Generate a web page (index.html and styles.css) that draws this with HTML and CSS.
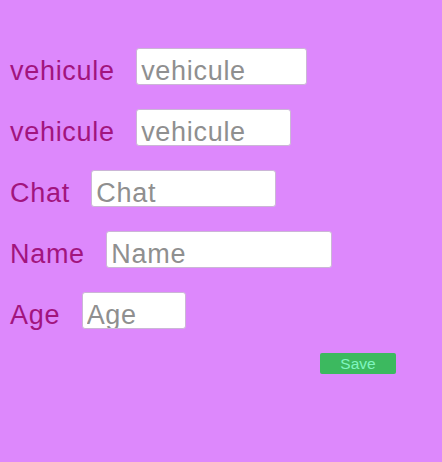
FILE: index.html
```html
<!DOCTYPE html>
<html>
<head>
<meta charset="utf-8">
<link rel="stylesheet" href="styles.css">
</head>
<body>
<form class="form">
  <div class="row"><label class="label">vehicule</label><input class="field w1" placeholder="vehicule"></div>
  <div class="row"><label class="label">vehicule</label><input class="field w2" placeholder="vehicule"></div>
  <div class="row"><label class="label">Chat</label><input class="field w3" placeholder="Chat"></div>
  <div class="row"><label class="label">Name</label><input class="field w4" placeholder="Name"></div>
  <div class="row"><label class="label">Age</label><input class="field w5" placeholder="Age"></div>
  <div class="actions"><button type="button" class="save">Save</button></div>
</form>
</body>
</html>
```
FILE: styles.css
```css
html, body {
  margin: 0;
  padding: 0;
  background: #dd88fc;
  height: 100%;
}
.form {
  display: flex;
  flex-direction: column;
  gap: 24px;
  padding: 48px 0 0 10px;
  font-family: "Liberation Sans", Arial, sans-serif;
}
.row {
  display: flex;
  align-items: baseline;
  gap: 21.5px;
  height: 37px;
}
.label {
  font-size: 27px;
  letter-spacing: 0.7px;
  line-height: 1;
  color: #a2147e;
}
.field {
  box-sizing: border-box;
  height: 37px;
  margin: 0;
  padding: 10px 4px 0;
  border: 1px solid #cbb6d6;
  border-radius: 3px;
  background: #fff;
  font-family: "Liberation Sans", Arial, sans-serif;
  font-size: 27px;
  letter-spacing: 0.7px;
  line-height: 26px;
  color: #333;
  outline: none;
}
.field::placeholder {
  color: #8f8f8f;
}
.w1 { width: 171px; }
.w2 { width: 155px; }
.w3 { width: 185px; }
.w4 { width: 226px; }
.w5 { width: 104px; }
.actions {
  display: flex;
  padding-left: 310px;
}
.save {
  box-sizing: border-box;
  width: 76px;
  height: 21px;
  margin: 0;
  padding: 0;
  border: none;
  border-radius: 2px;
  background: #3cb95f;
  color: #80f5c0;
  font-family: "Liberation Sans", Arial, sans-serif;
  font-size: 15.5px;
  line-height: 21px;
}
```
